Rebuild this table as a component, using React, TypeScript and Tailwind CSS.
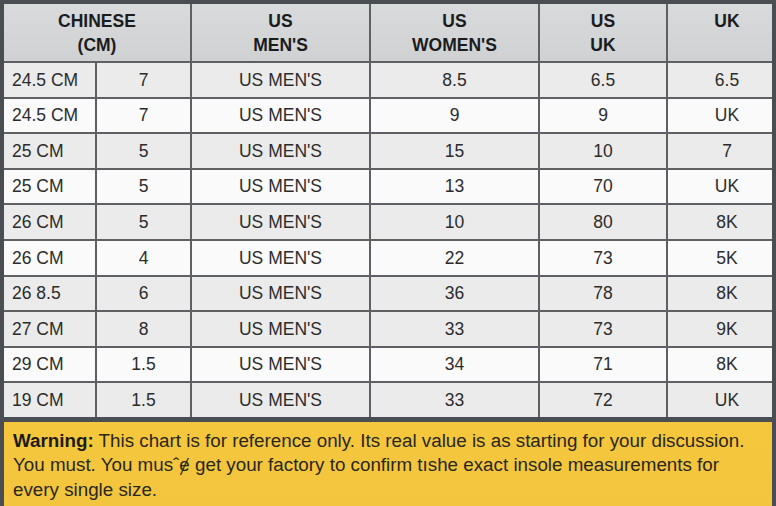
const font = { fontFamily: '"Liberation Sans", Arial, sans-serif' }

// body rows: [cm, chinese, us men's, us women's, us uk, uk, shaded]
const rows: [string, string, string, string, string, string, boolean][] = [
  ['24.5 CM', '7', "US MEN'S", '8.5', '6.5', '6.5', true],
  ['24.5 CM', '7', "US MEN'S", '9', '9', 'UK', false],
  ['25 CM', '5', "US MEN'S", '15', '10', '7', true],
  ['25 CM', '5', "US MEN'S", '13', '70', 'UK', false],
  ['26 CM', '5', "US MEN'S", '10', '80', '8K', true],
  ['26 CM', '4', "US MEN'S", '22', '73', '5K', false],
  ['26 8.5', '6', "US MEN'S", '36', '78', '8K', true],
  ['27 CM', '8', "US MEN'S", '33', '73', '9K', true],
  ['29 CM', '1.5', "US MEN'S", '34', '71', '8K', false],
  ['19 CM', '1.5', "US MEN'S", '33', '72', 'UK', true],
]

export default function App() {
  return (
    <div className="w-[776px] h-[506px] overflow-hidden bg-[#4a4d52] px-[4px] pt-[4px] flex flex-col" style={font}>
      {/* table */}
      <div className="flex flex-col">
        {/* header */}
        <div className="flex h-[57px] bg-gradient-to-b from-[#d8dadc] to-[#cfd1d3] text-[17.5px] leading-[24px] font-bold text-[#1b1c1e] text-center">
          <div className="w-[186px] pt-[5px]">
            CHINESE
            <br />
            (CM)
          </div>
          <div className="w-[179px] pt-[5px] border-l-2 border-[#5e6064]">
            US
            <br />
            MEN'S
          </div>
          <div className="w-[169px] pt-[5px] border-l-2 border-[#5e6064]">
            US
            <br />
            WOMEN'S
          </div>
          <div className="w-[128px] pt-[5px] border-l-2 border-[#5e6064]">
            US
            <br />
            UK
          </div>
          <div className="w-[106px] pt-[5px] pl-[14px] border-l-2 border-[#5e6064]">UK</div>
        </div>

        {rows.map((r, i) => (
          <div
            key={i}
            className={`flex h-[35.6px] border-t-2 border-[#5e6064] text-[17.5px] text-[#2c2c2c] ${
              r[6] ? 'bg-[#ebebeb]' : 'bg-[#fafafa]'
            }`}
          >
            <div className="w-[91px] pl-[8px] flex items-center">{r[0]}</div>
            <div className="w-[95px] border-l-2 border-[#5e6064] flex items-center justify-center">{r[1]}</div>
            <div className="w-[179px] border-l-2 border-[#5e6064] flex items-center justify-center">{r[2]}</div>
            <div className="w-[169px] border-l-2 border-[#5e6064] flex items-center justify-center">{r[3]}</div>
            <div className="w-[128px] border-l-2 border-[#5e6064] flex items-center justify-center">{r[4]}</div>
            <div className="w-[106px] border-l-2 border-[#5e6064] pl-[14px] flex items-center justify-center">{r[5]}</div>
          </div>
        ))}
      </div>

      {/* warning */}
      <div className="mt-[5px] flex-1 bg-gradient-to-b from-[#f5c73c] to-[#f3c53f] px-[9px] pt-[7px] text-[18.8px] leading-[24.5px] text-[#2a2620]">
        <span className="font-bold text-[#1e1b16]">Warning:</span> This chart is for reference only. Its real value is as starting for your discussion. You must. You musˆɇ get your factory to confirm tıshe exact insole measurements for every single size.
      </div>
    </div>
  )
}
